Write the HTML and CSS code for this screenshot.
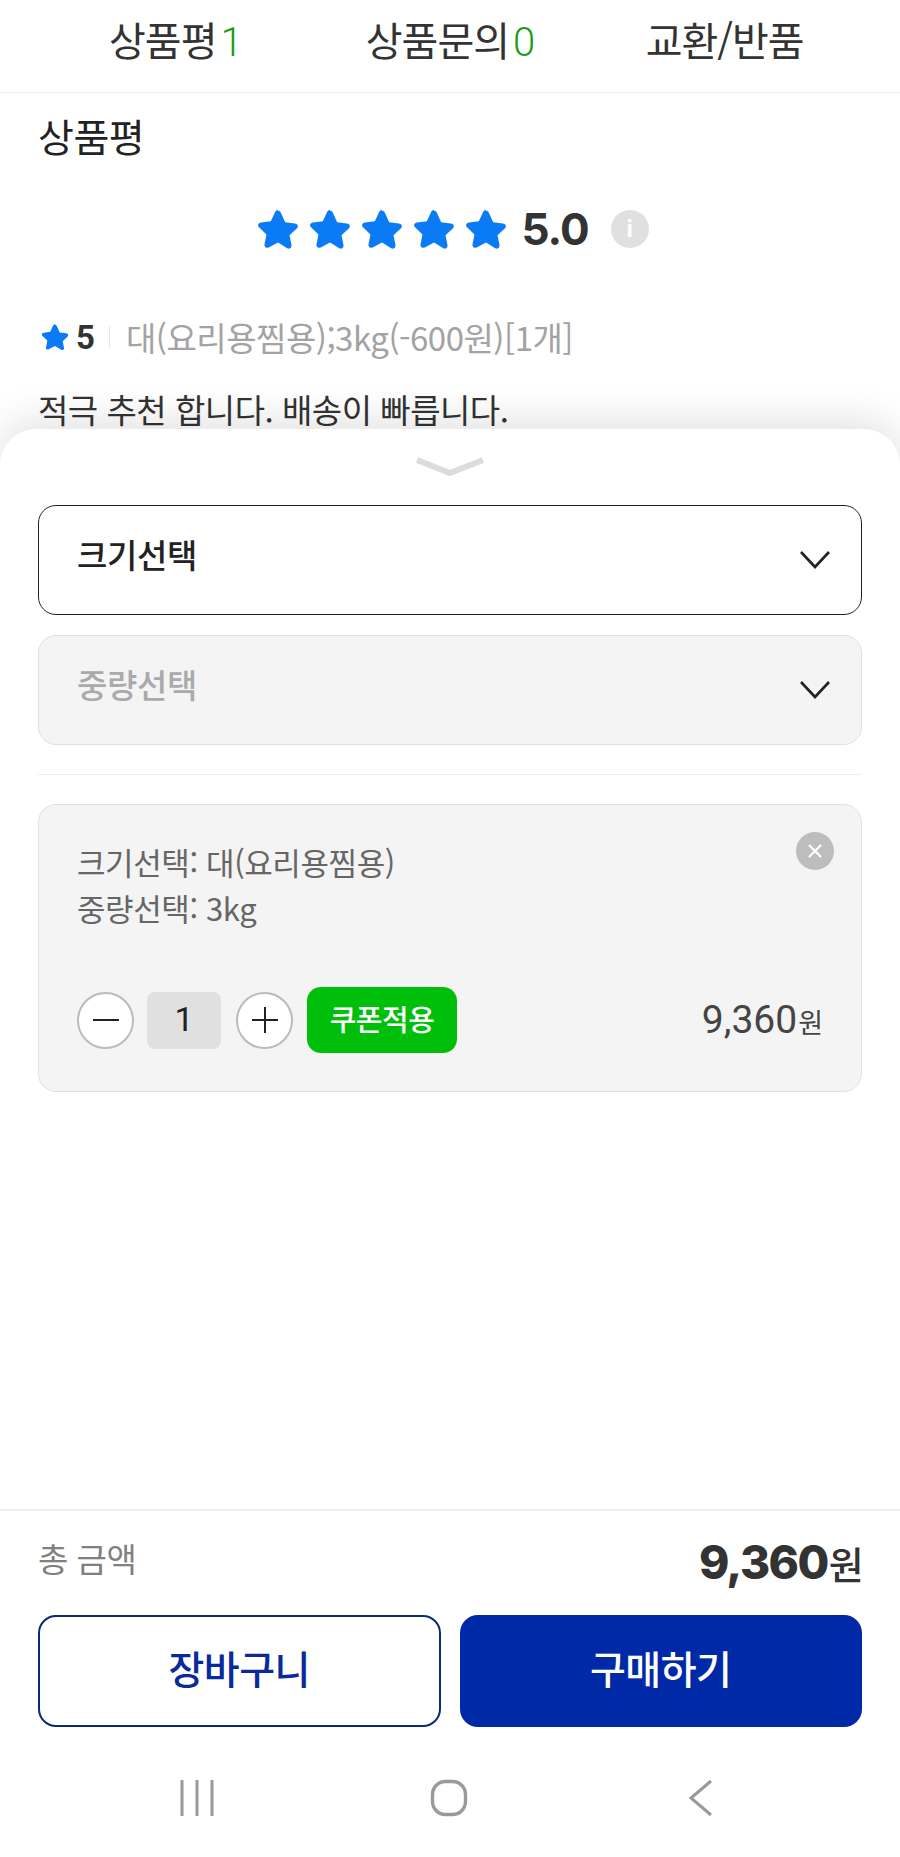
FILE: index.html
```html
<!DOCTYPE html>
<html lang="ko">
<head>
	<meta charset="utf-8">
	<title>상품평</title>
	<link rel="stylesheet" href="styles.css">
</head>
<body>
<svg class="defs" width="0" height="0">
	<symbol id="star" viewBox="0 0 24 24"><path d="M12 1.6c.8 0 1.3.5 1.7 1.3l2.4 5.2 5.6.7c1.7.2 2.2 1.7 1 2.9l-4.1 3.9 1.1 5.6c.3 1.6-1 2.5-2.4 1.8L12 19.7l-5.3 2.8c-1.4.7-2.7-.2-2.4-1.8l1.1-5.6-4.1-3.9c-1.2-1.2-.7-2.7 1-2.9l5.6-.7 2.4-5.2c.4-.8.9-1.3 1.7-1.3z"/></symbol>
	<symbol id="arrow" viewBox="0 0 32 20"><path d="M2 2l14 15L30 2" fill="none" stroke="#222" stroke-width="2.6"/></symbol>
</svg>
<div id="page">
	<ul class="tabs">
		<li>상품평<em>1</em></li>
		<li>상품문의<em>0</em></li>
		<li>교환/반품</li>
	</ul>
	<div class="review">
		<h2>상품평</h2>
		<div class="score">
			<svg class="star"><use href="#star"/></svg>
			<svg class="star"><use href="#star"/></svg>
			<svg class="star"><use href="#star"/></svg>
			<svg class="star"><use href="#star"/></svg>
			<svg class="star"><use href="#star"/></svg>
			<b>5.0</b>
			<span class="info">i</span>
		</div>
		<div class="meta">
			<svg class="star small"><use href="#star"/></svg>
			<b>5</b>
			<span class="bar"></span>
			<span class="opt">대(요리용찜용);3kg(-600원)[1개]</span>
		</div>
		<p>적극 추천 합니다. 배송이 빠릅니다.</p>
	</div>
	<div class="sheet">
		<svg class="handle" viewBox="0 0 72 22"><path d="M3 4l33 13L69 4" fill="none" stroke="#dcdcdc" stroke-width="6"/></svg>
		<div class="select"><span>크기선택</span><svg class="arrow"><use href="#arrow"/></svg></div>
		<div class="select off"><span>중량선택</span><svg class="arrow"><use href="#arrow"/></svg></div>
		<div class="line"></div>
		<div class="card">
			<span class="close"><svg viewBox="0 0 16 16"><path d="M2 2l12 12M14 2L2 14" stroke="#fff" stroke-width="2.2"/></svg></span>
			<div class="picked">크기선택: 대(요리용찜용)</div>
			<div class="picked">중량선택: 3kg</div>
			<div class="qty">
				<span class="round"><svg viewBox="0 0 28 28"><path d="M1 14h26" stroke="#222" stroke-width="2"/></svg></span>
				<span class="num">1</span>
				<span class="round"><svg viewBox="0 0 28 28"><path d="M1 14h26M14 1v26" stroke="#222" stroke-width="2"/></svg></span>
				<span class="coupon">쿠폰적용</span>
				<span class="price">9,360<small>원</small></span>
			</div>
		</div>
		<div class="foot">
			<div class="total">
				<span>총 금액</span>
				<b>9,360<small>원</small></b>
			</div>
			<div class="btns">
				<a class="cart">장바구니</a>
				<a class="buy">구매하기</a>
			</div>
		</div>
		<div class="nav">
			<svg width="34" height="36" viewBox="0 0 34 36"><path d="M2 0v36M17 0v36M32 0v36" stroke="#999" stroke-width="3"/></svg>
			<svg width="38" height="38" viewBox="0 0 38 38"><rect x="2.5" y="2.5" width="33" height="33" rx="13" fill="none" stroke="#999" stroke-width="3.4"/></svg>
			<svg width="26" height="38" viewBox="0 0 26 38"><path d="M23 2L3 19l20 17" fill="none" stroke="#999" stroke-width="3"/></svg>
		</div>
	</div>
</div>
</body>
</html>
```

FILE: styles.css
```css
body,div,ul,li,h2,p{margin:0;padding:0;}
ul{list-style-type:none;}
body{background:#fff;color:#333;font-family:"Noto Sans CJK KR","Noto Sans",sans-serif;}
.defs{display:block;height:0;}
#page{width:900px;height:1857px;overflow:hidden;display:flex;flex-direction:column;}

.tabs{display:flex;height:92px;padding:0 38px;border-bottom:1px solid #f0f0f0;font-size:40px;letter-spacing:-1px;line-height:78px;flex-shrink:0;}
.tabs li{flex:1;text-align:center;}
.tabs em{font-style:normal;color:#1a9c1a;font-family:"Roboto",sans-serif;font-weight:300;margin-left:4px;}

.review{height:336px;padding:0 38px;flex-shrink:0;}
.review h2{font-size:39px;font-weight:400;line-height:44px;padding-top:20px;letter-spacing:-.5px;color:#222;}
.star{width:42px;height:42px;fill:#0a7bf5;}
.score{display:flex;align-items:center;justify-content:center;height:70px;margin-top:37px;padding-left:6px;gap:10px;}
.score b{font:700 44px "Inter",sans-serif;letter-spacing:-1px;margin:0 12px 0 4px;}
.info{width:38px;height:38px;border-radius:50%;background:#e0e0e0;color:#fff;font:700 24px/38px "Roboto",sans-serif;text-align:center;}
.meta{display:flex;align-items:center;height:40px;margin-top:53px;padding-left:3px;}
.star.small{width:28px;height:28px;margin-right:5px;}
.meta b{font:700 33px "Roboto",sans-serif;margin-left:2px;}
.bar{width:1px;height:22px;background:#e5e5e5;margin:0 16px 0 14px;}
.opt{font-size:33px;color:#a3a3a3;letter-spacing:-.5px;}
.review p{font-size:33px;line-height:46px;margin-top:29px;letter-spacing:-.5px;}

.sheet{flex:1;background:#fff;border-radius:36px 36px 0 0;box-shadow:0 -8px 40px rgba(0,0,0,.12);padding:0 38px;display:flex;flex-direction:column;position:relative;}
.handle{display:block;width:72px;height:22px;margin:27px auto 27px;}

.select{height:110px;box-sizing:border-box;border:1.5px solid #222;border-radius:18px;padding:0 30px 0 38px;display:flex;align-items:center;justify-content:space-between;font-size:33px;font-weight:500;color:#222;letter-spacing:-.4px;line-height:100px;margin-bottom:20px;}
.select span{margin-bottom:12px;}
.select.off{background:#f4f4f4;border-color:#e0e0e0;color:#aaa;}
.arrow{width:32px;height:20px;}
.line{height:1px;background:#eee;margin:9px 0 29px;}

.card{height:288px;box-sizing:border-box;background:#f4f4f4;border:1.5px solid #e2e2e2;border-radius:18px;padding:34px 38px 0;position:relative;}
.close{position:absolute;right:27px;top:27px;width:38px;height:38px;border-radius:50%;background:#bdbdbd;display:flex;align-items:center;justify-content:center;}
.close svg{width:16px;height:16px;}
.picked{font-size:31px;line-height:46px;color:#666;letter-spacing:-.4px;}
.qty{display:flex;align-items:center;height:66px;margin-top:56px;}
.round{width:57px;height:57px;box-sizing:border-box;border:2px solid #bbb;border-radius:50%;background:#fff;display:flex;align-items:center;justify-content:center;}
.round svg{width:28px;height:28px;}
.num{width:74px;height:57px;background:#e0e0e0;border-radius:8px;margin:0 15px 0 13px;text-align:center;font:400 34px/54px "Roboto",sans-serif;color:#222;}
.coupon{width:150px;height:66px;background:#00bf0b;border-radius:14px;margin-left:14px;color:#fff;font-size:29px;font-weight:500;line-height:62px;text-align:center;letter-spacing:-.5px;}
.price{margin-left:auto;margin-right:0;font:400 39px "Roboto",sans-serif;color:#444;}
.price small{font:400 27px "Noto Sans CJK KR",sans-serif;margin-left:1px;}

.foot{position:absolute;left:0;right:0;top:1080px;padding:0 38px;border-top:2px solid #eee;}
.total{display:flex;justify-content:space-between;align-items:center;height:104px;}
.total span{font-size:33px;color:#808080;letter-spacing:-.5px;margin-top:-10px;}
.total b{font:800 46px "Inter",sans-serif;letter-spacing:-1.6px;margin-top:-2px;}
.total small{font:500 38px "Noto Sans CJK KR",sans-serif;margin-left:1px;}
.btns{display:flex;gap:19px;}
.btns a{flex:1;height:112px;box-sizing:border-box;border:2px solid #0a2a78;border-radius:18px;text-align:center;font-size:39px;font-weight:500;line-height:100px;letter-spacing:-.5px;}
.cart{color:#0a2a9c;}
.buy{background:#0029a8;border-color:#0029a8 !important;color:#fff;}

.nav{position:absolute;left:71px;top:1350px;display:grid;grid-template-columns:repeat(3,252px);justify-items:center;align-items:center;}
```
